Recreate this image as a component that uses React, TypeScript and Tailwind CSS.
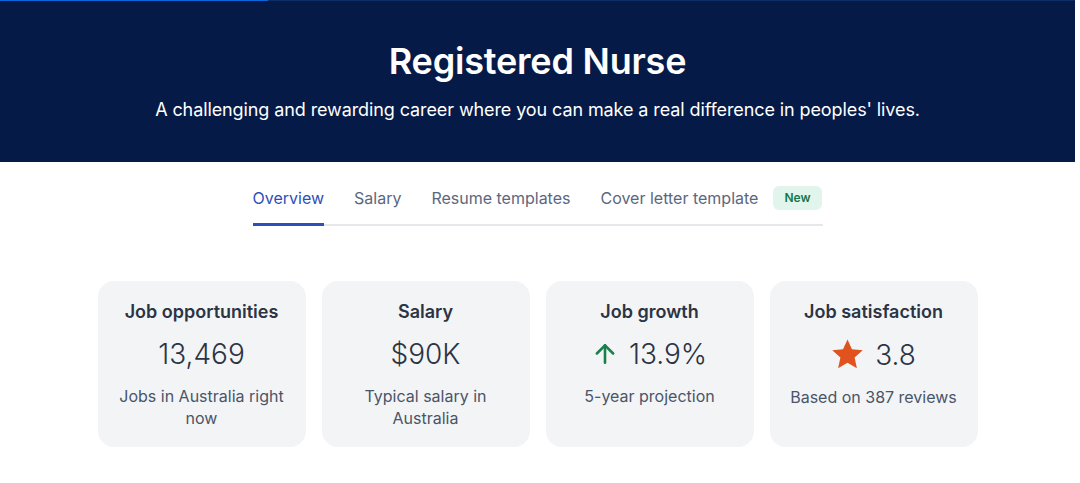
import React from 'react';

const font = { fontFamily: 'Inter, "Noto Sans", sans-serif' };

type Stat = { title: string; value: string; note: string; icon?: 'up' | 'star' };

const stats: Stat[] = [
  { title: 'Job opportunities', value: '13,469', note: 'Jobs in Australia right now' },
  { title: 'Salary', value: '$90K', note: 'Typical salary in Australia' },
  { title: 'Job growth', value: '13.9%', note: '5-year projection', icon: 'up' },
  { title: 'Job satisfaction', value: '3.8', note: 'Based on 387 reviews', icon: 'star' },
];

function ArrowUp() {
  return (
    <svg width="26" height="26" viewBox="0 0 24 24" fill="none" stroke="#1a7f4b" strokeWidth="2.4" strokeLinecap="round" strokeLinejoin="round">
      <path d="M12 20V4" />
      <path d="M4.5 11.5L12 4l7.5 7.5" />
    </svg>
  );
}

function Star() {
  return (
    <svg width="37" height="37" viewBox="0 0 24 24" fill="#e0531f" className="-mx-[2px]">
      <path d="M12 2.2l2.9 6.4 7 .7-5.3 4.7 1.5 6.9L12 17.4l-6.1 3.5 1.5-6.9L2.1 9.3l7-.7z" />
    </svg>
  );
}

function StatCard({ stat }: { stat: Stat }) {
  return (
    <div className="w-[208px] h-[166px] rounded-2xl bg-[#f3f4f6] flex flex-col items-center pt-[18px] px-4 text-center">
      <div className="text-[18px] leading-[26px] font-semibold text-[#2b3445]">{stat.title}</div>
      <div className="mt-[11px] flex items-center gap-[11px] text-[28px] leading-[36px] font-light text-[#2b3445]">
        {stat.icon === 'up' && <ArrowUp />}
        {stat.icon === 'star' && <Star />}
        <span>{stat.value}</span>
      </div>
      <div className="mt-[13px] text-[16px] leading-[22px] text-[#4a5568]">{stat.note}</div>
    </div>
  );
}

export default function App() {
  const tabs = ['Overview', 'Salary', 'Resume templates', 'Cover letter template'];
  return (
    <div className="w-[1075px] min-h-[483px] bg-white" style={font}>
      <header className="relative h-[162px] bg-[#061a48] flex flex-col items-center pt-[38px]">
        <div className="absolute top-0 left-0 w-full h-[1px] bg-[#0c2d66]" />
        <div className="absolute top-0 left-0 w-[268px] h-[1px] bg-[#0a66dd]" />
        <h1 className="text-[36px] leading-[46px] font-semibold text-white tracking-[-0.2px]">Registered Nurse</h1>
        <p className="mt-[13px] text-[18px] leading-[26px] text-white tracking-[-0.1px]">
          A challenging and rewarding career where you can make a real difference in peoples' lives.
        </p>
      </header>

      <nav className="flex justify-center pt-[24px]">
        <div className="flex items-center gap-[30px] border-b-2 border-[#e5e7eb] w-[570px] whitespace-nowrap">
          {tabs.map((t, i) => (
            <div
              key={t}
              className={`relative shrink-0 pb-[14px] text-[16px] leading-[24px] ${i === 0 ? 'text-[#2c50b8]' : 'text-[#5b6780]'}`}
            >
              {t}
              {i === 0 && <div className="absolute left-0 right-0 -bottom-[2px] h-[3px] bg-[#2c50b8]" />}
            </div>
          ))}
          <span className="shrink-0 -ml-[15px] mb-[14px] px-[11px] py-[3px] rounded-md bg-[#e1f5ec] text-[#17764a] text-[12px] leading-[18px] font-semibold">
            New
          </span>
        </div>
      </nav>

      <section className="flex justify-center gap-4 mt-[55px]">
        {stats.map(s => (
          <StatCard key={s.title} stat={s} />
        ))}
      </section>
    </div>
  );
}
